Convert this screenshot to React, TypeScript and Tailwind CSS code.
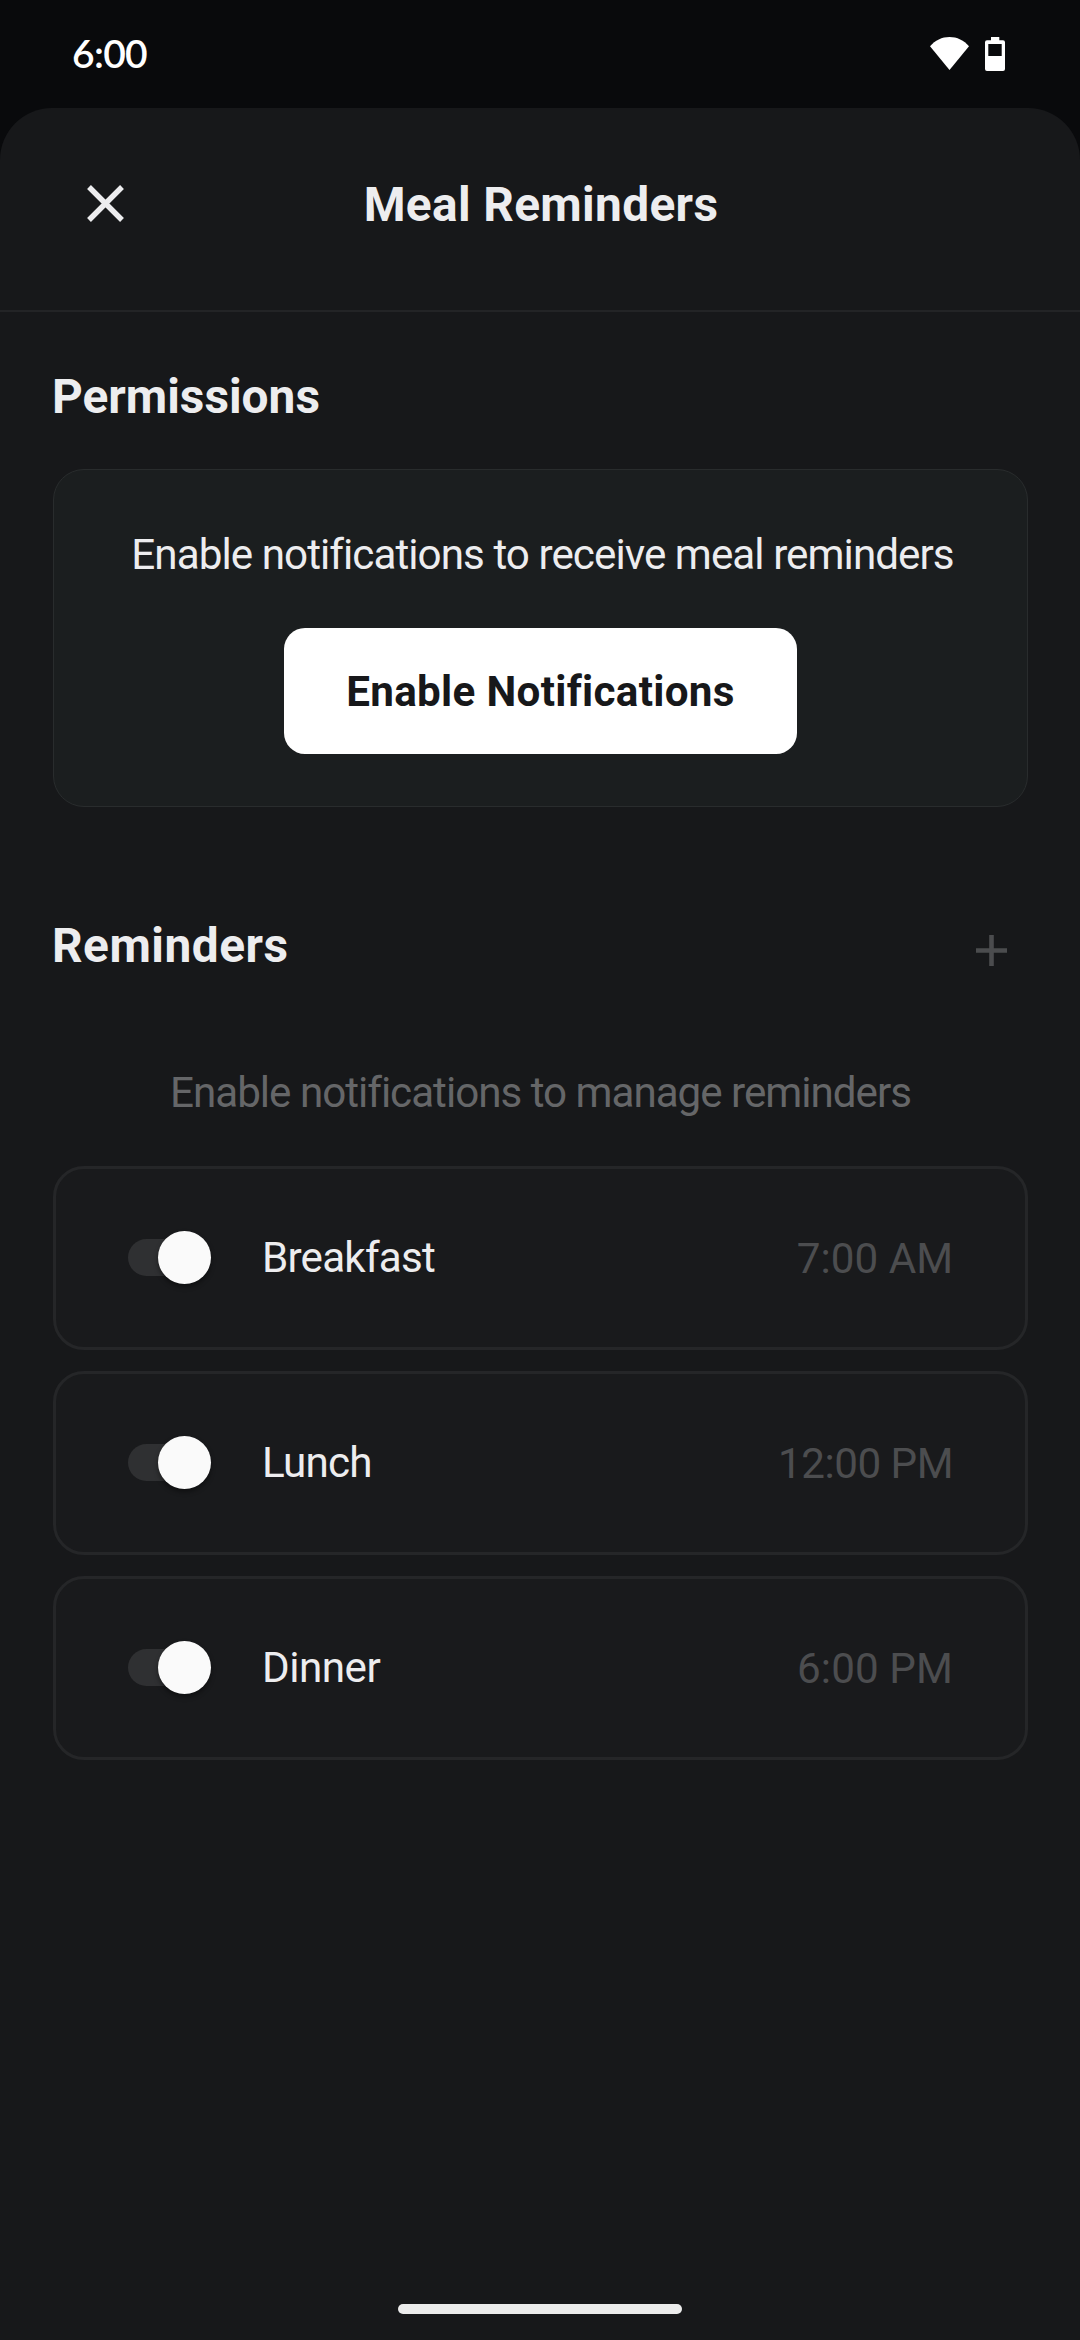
const reminders = [
  { name: "Breakfast", time: "7:00 AM", nameSpacing: "tracking-[-0.8px]", timeSpacing: "tracking-[0px]" },
  { name: "Lunch", time: "12:00 PM", nameSpacing: "tracking-[-0.8px]", timeSpacing: "tracking-[-0.5px]" },
  { name: "Dinner", time: "6:00 PM", nameSpacing: "tracking-[-0.5px]", timeSpacing: "tracking-[0.1px]" },
];

function StatusBar() {
  return (
    <div className="flex h-[108px] shrink-0 items-start justify-between pl-[72px] pr-[75px] text-white">
      <span className="mt-[28px] font-['Lato',sans-serif] text-[39px] font-semibold leading-[50px] tracking-[-0.7px]">6:00</span>
      <div className="mt-[37px] flex items-start gap-4">
        <svg className="h-[34px] w-[39px]" viewBox="0 0 39 34" fill="currentColor">
          <path d="M19.5 33 L0 9.3 C5 3.3 12 0 19.5 0 C27 0 34 3.3 39 9.3 Z" />
        </svg>
        <svg className="h-[34px] w-5" viewBox="0 0 20 34" fill="currentColor" fillRule="evenodd">
          <path d="M6 0 H14.3 V3.3 H18 Q20 3.3 20 5.3 V32 Q20 34 18 34 H2 Q0 34 0 32 V5.3 Q0 3.3 2 3.3 H6 Z M3.3 7 V19 H16.7 V7 Z" />
        </svg>
      </div>
    </div>
  );
}

function Toggle() {
  return (
    <div className="relative mb-px flex h-[53px] w-[83px] items-center">
      <div className="h-[37px] w-[72px] rounded-full bg-[#2f3032]" />
      <div className="absolute right-0 top-0 size-[53px] rounded-full bg-[#fafafa] shadow-[0_3px_5px_rgba(0,0,0,0.4)]" />
    </div>
  );
}

export default function App() {
  return (
    <div className="flex h-[2340px] w-[1080px] flex-col overflow-hidden bg-[#090a0c] font-['Roboto',sans-serif] text-[#ededef]">
      <StatusBar />
      <div className="flex flex-1 flex-col rounded-t-[52px] bg-[#17181a]">
        <header className="grid h-[204px] grid-cols-[1fr_auto_1fr] items-center border-b-2 border-[#232426] pb-[11px]">
          <button className="ml-[87px] size-[37px]" aria-label="Close">
            <svg className="size-[37px]" viewBox="0 0 37 37" stroke="currentColor" strokeWidth="5.4">
              <path d="M2 2 L35 35 M35 2 L2 35" />
            </svg>
          </button>
          <h1 className="pl-0.5 pt-[2px] text-[47.8px] font-bold leading-[56px] tracking-[0.35px]">Meal Reminders</h1>
        </header>

        <main className="flex flex-1 flex-col pl-[53px] pr-[52px]">
          <h2 className="-ml-px mt-[57px] text-[47.8px] font-bold leading-[56px]">Permissions</h2>
          <section className="mt-11 flex h-[338px] flex-col items-center rounded-[31px] border border-[#292c2d] bg-[#1b1e1f] pt-[60px]">
            <p className="ml-1 text-[42.2px] leading-[50px] tracking-[-0.95px]">Enable notifications to receive meal reminders</p>
            <button className="mt-12 h-[126px] w-[513px] rounded-[21px] bg-white pt-0.5 text-[42.2px] font-bold leading-[50px] tracking-[0.3px] text-[#17181a]">
              Enable Notifications
            </button>
          </section>

          <div className="mt-[111px] flex h-14 items-center justify-between">
            <h2 className="-ml-px text-[47.8px] font-bold leading-[56px] tracking-[0.5px]">Reminders</h2>
            <button className="mr-[13px] mt-[9px] flex size-[47px] items-center justify-center text-[#4b4c4e]" aria-label="Add reminder">
              <svg className="size-[31px]" viewBox="0 0 31 31" stroke="currentColor" strokeWidth="4.6">
                <path d="M15.5 0 V31 M0 15.5 H31" />
              </svg>
            </button>
          </div>
          <p className="mt-[94px] text-center text-[42.2px] leading-[50px] tracking-[-1.02px] text-[#656668]">
            Enable notifications to manage reminders
          </p>

          <div className="mt-12 flex flex-col gap-[21px]">
            {reminders.map((r) => (
              <div
                key={r.name}
                className="flex h-[184px] items-center rounded-[31px] border-[3px] border-[#252628] bg-[#191a1c] px-[72px] text-[42.2px] leading-[50px]"
              >
                <Toggle />
                <span className={`ml-[51px] flex-1 ${r.nameSpacing}`}>{r.name}</span>
                <span className={`pt-0.5 text-[#4c4d4f] ${r.timeSpacing}`}>{r.time}</span>
              </div>
            ))}
          </div>
        </main>
        <div className="mb-[26px] h-[10px] w-[284px] self-center rounded-full bg-[#ececec]" />
      </div>
    </div>
  );
}
